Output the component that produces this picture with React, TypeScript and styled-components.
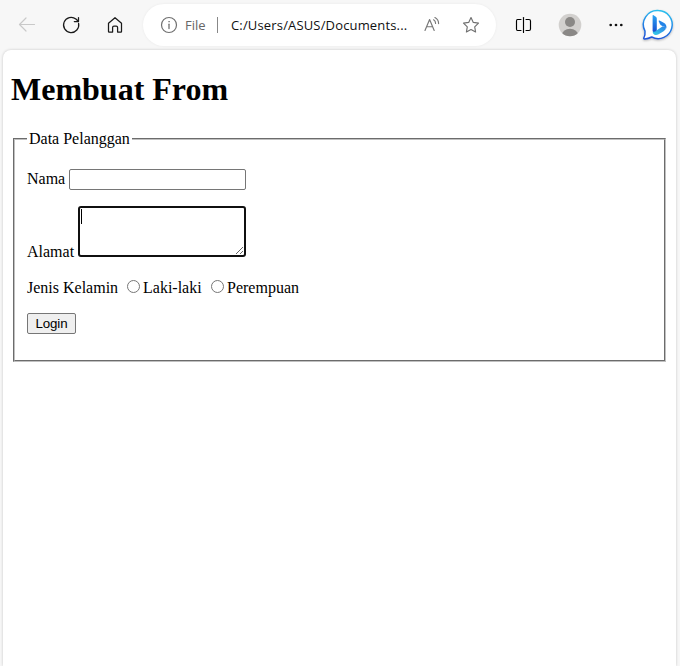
import React from "react";
import styled, { createGlobalStyle } from "styled-components";

const GlobalStyle = createGlobalStyle`
  * { box-sizing: border-box; }
  html, body { margin: 0; height: 100%; overflow: hidden; background: #f7f7f7; }
`;

const Browser = styled.div`
  display: flex;
  flex-direction: column;
  height: 100vh;
  background: #f7f7f7;
`;

const Toolbar = styled.header`
  flex: none;
  height: 50px;
  display: flex;
  align-items: center;
  padding: 0 6px 0 17px;
`;

const ToolButton = styled.span<{ $w?: number; $gap?: number }>`
  flex: none;
  width: ${(p) => p.$w ?? 20}px;
  height: 50px;
  margin-left: ${(p) => p.$gap ?? 0}px;
  display: flex;
  align-items: center;
  justify-content: center;
  svg { display: block; flex: none; }
`;

const AddressBar = styled.div`
  flex: none;
  width: 353px;
  height: 42px;
  margin-left: 18px;
  border-radius: 21px;
  background: #fff;
  box-shadow: 0 0 3px rgba(0, 0, 0, 0.06);
  display: flex;
  align-items: center;
  font: 14px/20px "Open Sans", "Noto Sans", sans-serif;
  white-space: nowrap;
`;

const Scheme = styled.span`
  margin-left: 6px;
  width: 22px;
  color: #666;
  font-size: 13px;
`;

const Divider = styled.span`
  width: 1px;
  height: 16px;
  margin: 0 13px 0 10px;
  background: #888;
`;

const Url = styled.span`
  width: 179px;
  color: #111;
  font-size: 13px;
  letter-spacing: 0.16px;
`;

const Page = styled.main`
  flex: 1;
  margin: 0 4px 0 3px;
  padding: 21px 8px 0;
  border-radius: 8px 8px 0 0;
  background: #fff;
  box-shadow: 0 0 3px rgba(0, 0, 0, 0.2);
  color: #000;
  font: 16px/18px "Liberation Serif", "Times New Roman", serif;
`;

const Title = styled.h1`
  margin: 0 0 22px;
  font-size: 32px;
  line-height: 37px;
  font-weight: 700;
`;

const Fieldset = styled.fieldset`
  height: 232px;
  margin: 0 2px;
  padding: 5px 12px 10px;
  border: 2px groove #c0c0c0;
`;

const Legend = styled.legend`
  padding: 0 2px;
`;

const Row = styled.div<{ $h: number; $gap: number }>`
  display: flex;
  align-items: flex-end;
  height: ${(p) => p.$h}px;
  margin-top: ${(p) => p.$gap}px;
`;

const Label = styled.label<{ $w?: number; $drop?: number }>`
  flex: none;
  width: ${(p) => (p.$w ? `${p.$w}px` : "auto")};
  margin-bottom: ${(p) => -(p.$drop ?? 0)}px;
`;

const TextInput = styled.input`
  width: 177px;
  height: 21px;
  margin: 0;
  padding: 1px 2px;
  border: 1px solid #767676;
  border-radius: 2px;
  background: #fff;
  outline: none;
`;

const AreaWrap = styled.div`
  position: relative;
  width: 168px;
  height: 51px;
`;

const TextArea = styled.textarea`
  display: block;
  width: 100%;
  height: 100%;
  margin: 0;
  padding: 2px;
  border: 2px solid #101010;
  border-radius: 3px;
  background: #fff;
  outline: none;
  overflow: hidden;
  resize: both;
`;

const Caret = styled.span`
  position: absolute;
  left: 3px;
  top: 3px;
  width: 1px;
  height: 15px;
  background: #000;
`;

const Radio = styled.input`
  flex: none;
  width: 13px;
  height: 13px;
  margin: 0 3px 4px 0;
`;

const LoginButton = styled.button`
  width: 49px;
  height: 21px;
  padding: 0;
  border: 1px solid #767676;
  border-radius: 2px;
  background: #efefef;
  color: #000;
  font: 13.333px/19px "Liberation Sans", Arial, sans-serif;
  letter-spacing: -0.1px;
`;

const stroke = (color: string, width = 1.2) => ({
  fill: "none",
  stroke: color,
  strokeWidth: width,
  strokeLinecap: "round" as const,
  strokeLinejoin: "round" as const,
});

const BackIcon = () => (
  <svg width="20" height="20" viewBox="0 0 20 20" {...stroke("#c9c9c9")}>
    <path d="M17.5 9.5h-15M9 3 2.5 9.5 9 16" />
  </svg>
);

const ReloadIcon = () => (
  <svg width="20" height="20" viewBox="0 0 20 20" {...stroke("#1a1a1a", 1.25)}>
    <path d="M17.6 8.4A7.6 7.6 0 1 1 14.9 4l2.4 2.3M17.5 2.5v4h-4.2" />
  </svg>
);

const HomeIcon = () => (
  <svg width="20" height="20" viewBox="0 0 20 20" {...stroke("#1a1a1a", 1.25)}>
    <path d="M3.5 8.3 10 2.7l6.5 5.6v8.1q0 .6-.6.6h-3.3v-4.4q0-1.4-1.4-1.4H9q-1.4 0-1.4 1.4V17H4.1q-.6 0-.6-.6Z" />
  </svg>
);

const InfoIcon = () => (
  <svg width="20" height="20" viewBox="0 0 20 20" {...stroke("#707070", 1.2)}>
    <circle cx="10" cy="10" r="7.5" />
    <path d="M10 9.2v4.3" strokeWidth="1.3" />
    <circle cx="10" cy="6.7" r=".45" fill="#707070" strokeWidth=".5" />
  </svg>
);

const ReadAloudIcon = () => (
  <svg width="20" height="20" viewBox="0 0 20 20" {...stroke("#777", 1.15)}>
    <path d="m3 15.5 4.6-11 4.6 11M4.6 11.7h6M11.6 4.8q2 1.2 2 3.6M12.9 2.6q3.7 2 3.7 6" />
  </svg>
);

const StarIcon = () => (
  <svg width="20" height="20" viewBox="0 0 20 20" {...stroke("#707070", 1.15)}>
    <path d="m10 2.6 2.3 4.8 5.2.7-3.8 3.7.9 5.2-4.6-2.5L5.4 17l.9-5.2-3.8-3.7 5.2-.7Z" />
  </svg>
);

const SplitIcon = () => (
  <svg width="20" height="20" viewBox="0 0 20 20" {...stroke("#000", 1.15)}>
    <path d="M8 4.5H4.5Q3.5 4.5 3.5 6v8q0 1.5 1 1.5H8M13 4.5h3q1.5 0 1.5 1.5v8q0 1.5-1.5 1.5h-3" />
    <path d="M10.5 2.5v15" />
  </svg>
);

const ProfileIcon = () => (
  <svg width="24" height="24" viewBox="0 0 24 24">
    <defs>
      <clipPath id="avatar"><circle cx="12" cy="12" r="11.3" /></clipPath>
    </defs>
    <circle cx="12" cy="12" r="11.3" fill="#d2d0ce" />
    <circle cx="12" cy="9" r="5" fill="#8a8886" />
    <ellipse cx="12" cy="22.5" rx="8.3" ry="6.8" fill="#8a8886" clipPath="url(#avatar)" />
  </svg>
);

const MoreIcon = () => (
  <svg width="20" height="20" viewBox="0 0 20 20" fill="#111">
    <circle cx="4.7" cy="10" r="1.35" />
    <circle cx="10" cy="10" r="1.35" />
    <circle cx="15.3" cy="10" r="1.35" />
  </svg>
);

const BingIcon = () => (
  <svg width="34" height="36" viewBox="0 0 34 36">
    <defs>
      <linearGradient id="ring" x1="0.6" y1="0" x2="0.4" y2="1">
        <stop offset="0" stopColor="#2bc0ee" />
        <stop offset=".5" stopColor="#2488e8" />
        <stop offset="1" stopColor="#2055d5" />
      </linearGradient>
      <linearGradient id="stem" x1="0" y1="0" x2="0" y2="1">
        <stop offset="0" stopColor="#28a5f3" />
        <stop offset="1" stopColor="#1749ce" />
      </linearGradient>
      <linearGradient id="bowl" x1="1" y1="0" x2="0" y2="1">
        <stop offset="0" stopColor="#2b7fe6" />
        <stop offset="1" stopColor="#36d1e8" />
      </linearGradient>
      <filter id="shade" x="-20%" y="-20%" width="140%" height="140%">
        <feDropShadow dx="0" dy="1" stdDeviation=".8" floodOpacity=".28" />
      </filter>
    </defs>
    <path
      d="M17.5 3.6a14 14 0 1 1-6.8 26.4q-3.8 2-7.3 1.9-.9-.1-.6-.9 1.6-3 1.2-6.9A14 14 0 0 1 17.5 3.6Z"
      fill="#fff" stroke="url(#ring)" strokeWidth="1.5" filter="url(#shade)"
    />
    <path d="M11.6 9q0-1.3 1-.7l2.2 1.5q1 .7 1 2V24l-2.2 2.2q-2-.7-2-2.6Z" fill="url(#stem)" />
    <path d="M15.8 23.2 21.8 19.3l3.2 1.2q.1 2-2.4 3.7l-5 3q-2.4 1.3-4.5.2-1.5-.9-1.5-3 1.8 1.2 4.2-1.2Z" fill="url(#bowl)" />
    <path d="M17.7 14.3q-.3-1.1.8-.7l4.2 2.1q3.5 2 2.6 5.8-1-1.7-3.8-2.4-2-.7-2.7-2.3Z" fill="#2384e8" />
  </svg>
);

export default function App() {
  return (
    <>
      <GlobalStyle />
      <Browser>
        <Toolbar>
          <ToolButton><BackIcon /></ToolButton>
          <ToolButton $gap={24}><ReloadIcon /></ToolButton>
          <ToolButton $gap={24}><HomeIcon /></ToolButton>
          <AddressBar>
            <ToolButton $gap={16}><InfoIcon /></ToolButton>
            <Scheme>File</Scheme>
            <Divider />
            <Url>C:/Users/ASUS/Documents...</Url>
            <ToolButton $gap={12}><ReadAloudIcon /></ToolButton>
            <ToolButton $gap={19}><StarIcon /></ToolButton>
          </AddressBar>
          <ToolButton $gap={17}><SplitIcon /></ToolButton>
          <ToolButton $w={24} $gap={25}><ProfileIcon /></ToolButton>
          <ToolButton $gap={24}><MoreIcon /></ToolButton>
          <ToolButton $w={34} $gap={15}><BingIcon /></ToolButton>
        </Toolbar>
        <Page>
          <Title>Membuat From</Title>
          <Fieldset>
            <Legend>Data Pelanggan</Legend>
            <Row $h={21} $gap={16}>
              <Label htmlFor="nama" $w={42} $drop={-2}>Nama</Label>
              <TextInput id="nama" />
            </Row>
            <Row $h={51} $gap={16}>
              <Label htmlFor="alamat" $w={51} $drop={4}>Alamat</Label>
              <AreaWrap>
                <TextArea id="alamat" />
                <Caret />
              </AreaWrap>
            </Row>
            <Row $h={18} $gap={22}>
              <Label $w={100}>Jenis Kelamin</Label>
              <Radio type="radio" name="gender" id="laki" />
              <Label htmlFor="laki" $w={68}>Laki-laki</Label>
              <Radio type="radio" name="gender" id="perempuan" />
              <Label htmlFor="perempuan">Perempuan</Label>
            </Row>
            <Row $h={21} $gap={16}>
              <LoginButton type="button">Login</LoginButton>
            </Row>
          </Fieldset>
        </Page>
      </Browser>
    </>
  );
}
